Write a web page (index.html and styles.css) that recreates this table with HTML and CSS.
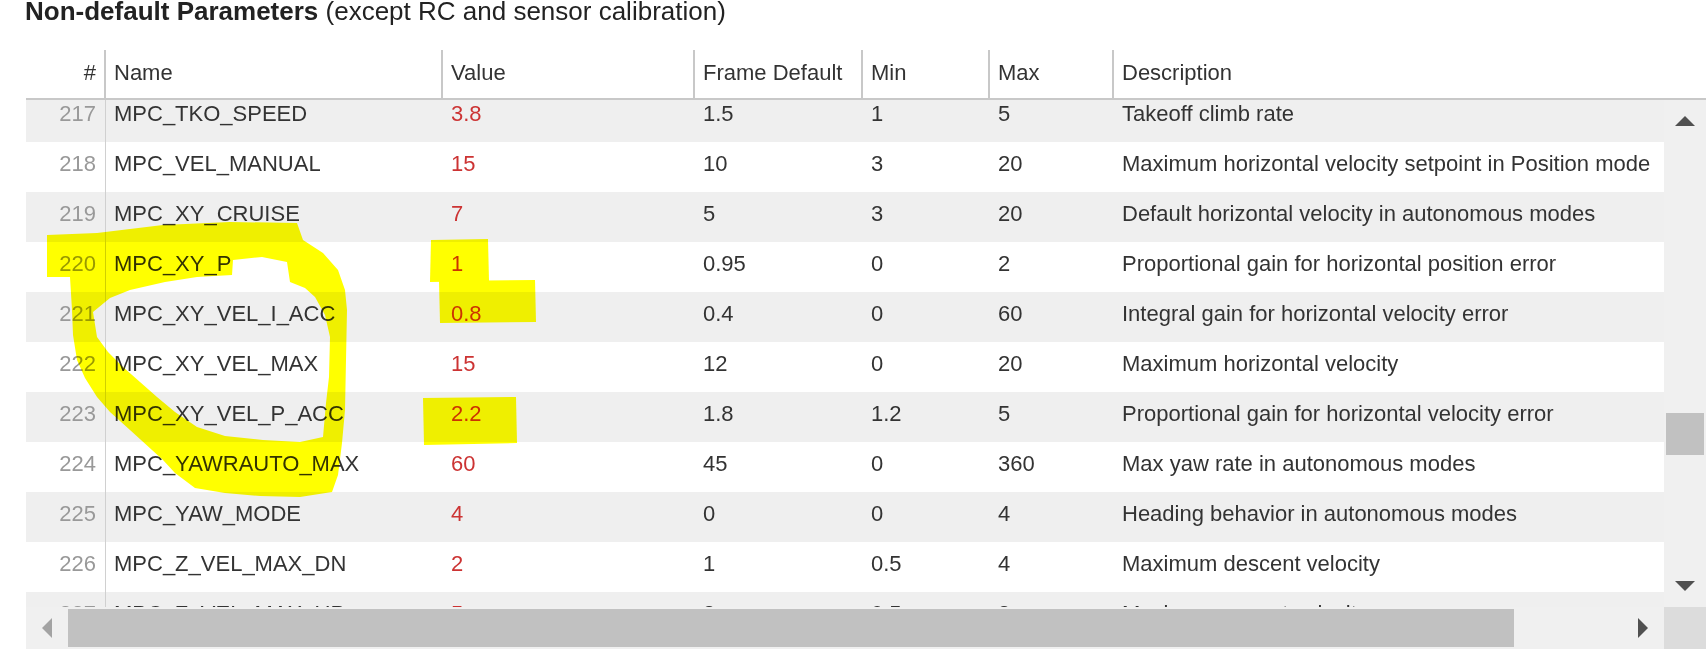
FILE: index.html
```html
<!DOCTYPE html>
<html lang="en">
<head>
<meta charset="utf-8">
<title>Non-default Parameters</title>
<link rel="stylesheet" href="styles.css">
</head>
<body>
<div class="page">
  <h1 class="title"><b>Non-default Parameters</b> (except RC and sensor calibration)</h1>
  <div class="table">
    <div class="hrow">
      <div class="hc num">#</div>
      <div class="hc">Name</div>
      <div class="hc">Value</div>
      <div class="hc">Frame Default</div>
      <div class="hc">Min</div>
      <div class="hc">Max</div>
      <div class="hc">Description</div>
    </div>
    <div class="scroller">
      <div class="rows">
        <div class="rows-inner">
          <div class="row"><div class="c num">217</div><div class="c name">MPC_TKO_SPEED</div><div class="c val">3.8</div><div class="c">1.5</div><div class="c">1</div><div class="c">5</div><div class="c">Takeoff climb rate</div></div>
          <div class="row"><div class="c num">218</div><div class="c name">MPC_VEL_MANUAL</div><div class="c val">15</div><div class="c">10</div><div class="c">3</div><div class="c">20</div><div class="c">Maximum horizontal velocity setpoint in Position mode</div></div>
          <div class="row"><div class="c num">219</div><div class="c name">MPC_XY_CRUISE</div><div class="c val">7</div><div class="c">5</div><div class="c">3</div><div class="c">20</div><div class="c">Default horizontal velocity in autonomous modes</div></div>
          <div class="row"><div class="c num">220</div><div class="c name">MPC_XY_P</div><div class="c val">1</div><div class="c">0.95</div><div class="c">0</div><div class="c">2</div><div class="c">Proportional gain for horizontal position error</div></div>
          <div class="row"><div class="c num">221</div><div class="c name">MPC_XY_VEL_I_ACC</div><div class="c val">0.8</div><div class="c">0.4</div><div class="c">0</div><div class="c">60</div><div class="c">Integral gain for horizontal velocity error</div></div>
          <div class="row"><div class="c num">222</div><div class="c name">MPC_XY_VEL_MAX</div><div class="c val">15</div><div class="c">12</div><div class="c">0</div><div class="c">20</div><div class="c">Maximum horizontal velocity</div></div>
          <div class="row"><div class="c num">223</div><div class="c name">MPC_XY_VEL_P_ACC</div><div class="c val">2.2</div><div class="c">1.8</div><div class="c">1.2</div><div class="c">5</div><div class="c">Proportional gain for horizontal velocity error</div></div>
          <div class="row"><div class="c num">224</div><div class="c name">MPC_YAWRAUTO_MAX</div><div class="c val">60</div><div class="c">45</div><div class="c">0</div><div class="c">360</div><div class="c">Max yaw rate in autonomous modes</div></div>
          <div class="row"><div class="c num">225</div><div class="c name">MPC_YAW_MODE</div><div class="c val">4</div><div class="c">0</div><div class="c">0</div><div class="c">4</div><div class="c">Heading behavior in autonomous modes</div></div>
          <div class="row"><div class="c num">226</div><div class="c name">MPC_Z_VEL_MAX_DN</div><div class="c val">2</div><div class="c">1</div><div class="c">0.5</div><div class="c">4</div><div class="c">Maximum descent velocity</div></div>
          <div class="row"><div class="c num">227</div><div class="c name">MPC_Z_VEL_MAX_UP</div><div class="c val">5</div><div class="c">3</div><div class="c">0.5</div><div class="c">8</div><div class="c">Maximum ascent velocity</div></div>
        </div>
      </div>
      <div class="vbar">
        <div class="btn"><span class="arrow up"></span></div>
        <div class="vthumb"></div>
        <div class="spacer"></div>
        <div class="btn"><span class="arrow down"></span></div>
      </div>
      <div class="hbar">
        <div class="btn"><span class="arrow left"></span></div>
        <div class="hthumb"></div>
        <div class="spacer"></div>
        <div class="btn"><span class="arrow right"></span></div>
      </div>
      <div class="corner"></div>
    </div>
  </div>
</div>
<svg class="ink" width="1706" height="649" viewBox="0 0 1706 649" aria-hidden="true">
  <path fill-rule="evenodd" d="M47,235 L97,233 L130,229 L163,225 L230,222 L297,223 L303,240 L323,253 L338,270 L345,290 L347,310 L346,360 L345,410 L342,443 L338,475 L332,492 L300,497 L260,496 L225,493 L195,488 L175,473 L163,460 L130,430 L110,412 L97,397 L85,378 L77,360 L73,335 L72,310 L70,277 L47,277 Z M93,312 L110,298 L130,290 L165,282 L197,277 L232,275 L233,260 L262,257 L287,262 L290,282 L305,288 L315,297 L325,315 L330,337 L329,377 L326,403 L323,437 L300,442 L263,440 L225,436 L197,427 L175,412 L157,397 L140,382 L123,367 L108,352 L97,337 Z"/>
  <path d="M431,240 L488,239 L489,281 L430,282 Z"/>
  <path d="M439,281 L535,280 L536,322 L440,323 Z"/>
  <path d="M423,398 L516,397 L517,443 L424,445 Z"/>
</svg>
</body>
</html>
```

FILE: styles.css
```css
* { box-sizing: border-box; }
html, body { margin: 0; }
body {
  width: 1706px;
  height: 649px;
  overflow: hidden;
  position: relative;
  background: #fff;
  color: #333;
  font-family: "Liberation Sans", Arial, sans-serif;
}
.page { padding-left: 26px; }
.title {
  margin: 0 0 28px -1px;
  font-size: 26px;
  line-height: 22px;
  font-weight: normal;
  color: #222;
  white-space: nowrap;
}
.title b { font-weight: bold; }

.table { font-size: 22px; }
.hrow, .row {
  display: grid;
  grid-template-columns: 78px 337px 252px 168px 127px 124px 1fr;
}
.hrow {
  width: 1680px;
  border-bottom: 2px solid #c8c8c8;
}
.hc {
  padding: 8px 8px 10px;
  line-height: 30px;
  border-left: 2px solid #c8c8c8;
  white-space: nowrap;
}
.hc.num { border-left: none; text-align: right; }

.scroller {
  display: grid;
  grid-template-columns: 1638px 42px;
  grid-template-rows: 507px 42px;
}
.rows { overflow: hidden; }
.rows-inner { margin-top: -8px; }
.row { height: 50px; background: #fff; }
.row:nth-child(odd) { background: #efefef; }
.c {
  padding: 7px 8px 13px;
  line-height: 30px;
  border-left: 2px solid transparent;
  white-space: nowrap;
  overflow: hidden;
}
.c.num { border-left: none; text-align: right; color: #999; }
.c.name { border-left: 1px solid #d0d0d0; margin-left: 1px; }
.c.val { color: #cc3333; }

.vbar {
  background: #f0f0f0;
  display: flex;
  flex-direction: column;
}
.hbar {
  background: #f0f0f0;
  display: flex;
}
.btn {
  flex: none;
  width: 42px;
  height: 42px;
  display: flex;
  align-items: center;
  justify-content: center;
}
.spacer { flex: 1; }
.vthumb {
  flex: none;
  margin: 271px 2px 0;
  height: 42px;
  background: #c1c1c1;
}
.hthumb {
  flex: none;
  width: 1446px;
  margin: 2px 0;
  background: #c1c1c1;
}
.corner { background: #dcdcdc; }

.arrow { width: 0; height: 0; display: block; }
.arrow.up { border-left: 10px solid transparent; border-right: 10px solid transparent; border-bottom: 10px solid #505050; }
.arrow.down { border-left: 10px solid transparent; border-right: 10px solid transparent; border-top: 10px solid #505050; }
.arrow.left { border-top: 10px solid transparent; border-bottom: 10px solid transparent; border-right: 10px solid #a3a3a3; }
.arrow.right { border-top: 10px solid transparent; border-bottom: 10px solid transparent; border-left: 10px solid #505050; }

.ink {
  position: absolute;
  top: 0;
  left: 0;
  pointer-events: none;
  mix-blend-mode: multiply;
  fill: #ffff00;
}
```
